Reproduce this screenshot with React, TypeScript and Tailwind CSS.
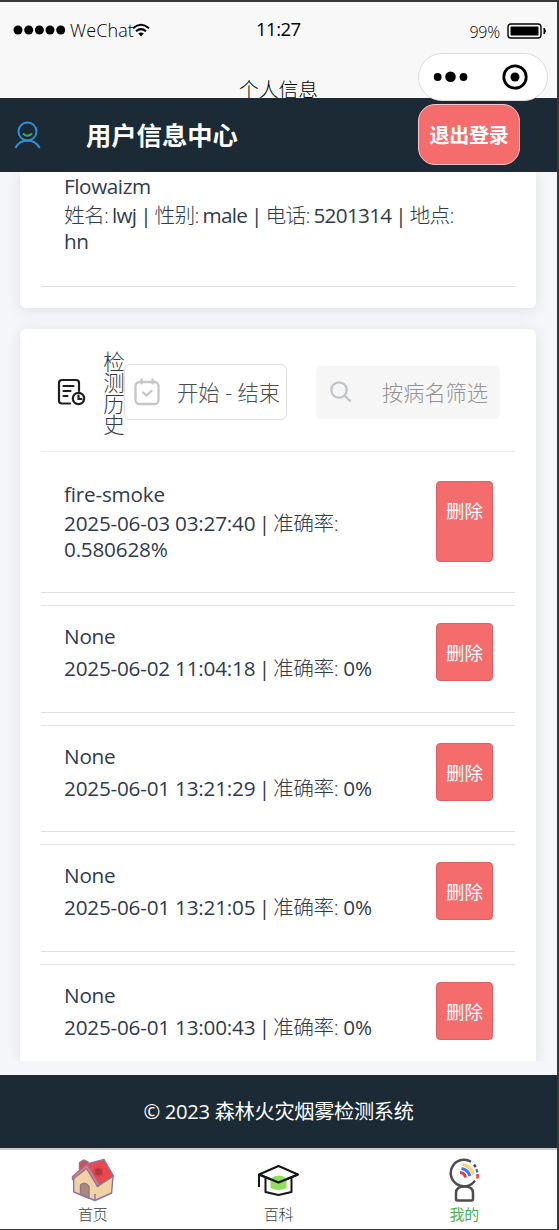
import type { ReactNode } from 'react';

type RecordItem = {
  name: string;
  date: string;
  rate: string;
  tall?: boolean;
  height: string;
};

const records: RecordItem[] = [
  {
    name: 'fire-smoke',
    date: '2025-06-03 03:27:40',
    rate: '0.580628%',
    tall: true,
    height: 'h-[130px] border-t-transparent',
  },
  { name: 'None', date: '2025-06-02 11:04:18', rate: '0%', height: 'h-[108px]' },
  { name: 'None', date: '2025-06-01 13:21:29', rate: '0%', height: 'h-[107px]' },
  { name: 'None', date: '2025-06-01 13:21:05', rate: '0%', height: 'h-[108px]' },
  { name: 'None', date: '2025-06-01 13:00:43', rate: '0%', height: 'h-[108px]' },
];

function StatusBar() {
  return (
    <div className="flex h-[56px] items-center pl-[13px] pr-2.5 text-black">
      <div className="flex w-[243px] items-center">
        <svg className="h-[10px] w-[53px]" viewBox="0 0 53 10">
          {[5, 15.7, 26.4, 37, 47.7].map((cx) => (
            <circle key={cx} cx={cx} cy="5" r="4.5" />
          ))}
        </svg>
        <span className="ml-[4px] w-[62px] whitespace-nowrap text-[18px] font-light tracking-[0.1px]">
          WeChat
        </span>
        <svg className="h-[14px] w-[18px]" viewBox="0 0 18 14" fill="none" stroke="#000">
          <path d="M1 5.2Q9-1.6 17 5.2" strokeWidth="2" />
          <path d="M4 8.2Q9 4 14 8.2" strokeWidth="2" />
          <path d="M6.2 10.6Q9 8.2 11.8 10.6L9 13.4Z" fill="#000" stroke="none" />
        </svg>
      </div>
      <span className="-mt-[2px] text-[18.5px] tracking-[-0.5px]">11:27</span>
      <div className="ml-auto flex items-center gap-[7px] pt-[4px]">
        <span className="text-[16px] font-light tracking-[-0.2px]">99%</span>
        <svg className="-mt-[2px] h-[16px] w-[40px]" viewBox="0 0 40 16">
          <rect x="1" y="1" width="33" height="14" rx="3" fill="none" stroke="#000" strokeWidth="1.4" />
          <rect x="3.5" y="3.5" width="28" height="9" rx="1" />
          <path d="M37 5q3 3 0 6z" stroke="#000" />
        </svg>
      </div>
    </div>
  );
}

function Capsule() {
  return (
    <div className="absolute left-[418px] top-[51px] z-10 flex h-[48px] w-[130px] items-center rounded-full border border-[#dcdcdc] bg-white">
      <svg className="h-[46px] w-[128px]" viewBox="0 0 128 46">
        <circle cx="18.7" cy="23" r="3.9" />
        <circle cx="31.5" cy="22.7" r="5.3" />
        <circle cx="44.5" cy="23" r="3.9" />
        <circle cx="96" cy="23" r="11.2" fill="none" stroke="#000" strokeWidth="2.8" />
        <circle cx="96" cy="23" r="4.5" />
      </svg>
    </div>
  );
}

function PageHeader() {
  return (
    <header className="flex h-[74px] shrink-0 items-center bg-[#1c2a35] pl-[14px]">
      <svg className="-mt-[1px] h-[28px] w-[27px]" viewBox="0 0 27 28" fill="none" strokeWidth="2">
        <circle cx="13.5" cy="10.5" r="9" stroke="#2f8fdf" />
        <path d="M1.3 27C4 22 8.5 19.6 13.5 19.6S23 22 25.7 27" stroke="#2f8fdf" />
        <path d="M9 12.5q4.5 4.5 9 0" stroke="#3fae46" />
      </svg>
      <h1 className="ml-[45px] w-[332px] whitespace-nowrap pt-[2px] text-[25.3px] font-bold leading-none text-white">
        用户信息中心
      </h1>
      <button className="-mt-[2px] h-[61px] w-[102px] whitespace-nowrap rounded-[17px] border border-[#fbc4c4] bg-[#f56c6c] pt-[3px] text-[20px] font-bold tracking-[-0.3px] text-white">
        退出登录
      </button>
    </header>
  );
}

function ProfileCard() {
  return (
    <section className="h-[136px] rounded-b-[6px] bg-white px-[21px] shadow-[0_2px_16px_rgba(0,0,0,0.09)]">
      <div className="h-[115px] whitespace-nowrap border-b border-[#dfdfdf] pl-[23px] pt-[1px] text-[20.7px] leading-[27px] tracking-[-0.4px]">
        <div>Flowaizm</div>
        <div className="mt-[2px] leading-[26px] tracking-[-0.7px] [word-spacing:-0.9px]">
          <span className="font-light">姓名:</span> lwj | <span className="font-light">性别:</span> male |{' '}
          <span className="font-light">电话:</span> 5201314 | <span className="font-light">地点:</span>
        </div>
        <div className="leading-[26px]">hn</div>
      </div>
    </section>
  );
}

function Filters() {
  return (
    <div className="flex h-[123px] items-center border-b border-[#ebebeb] pl-[16px] pt-[4px]">
      <svg className="h-[28px] w-[29px] shrink-0" viewBox="0 0 29 28" fill="none" stroke="#1f1f1f" strokeWidth="2.2" strokeLinecap="round">
        <path d="M13 25.5H5a3 3 0 0 1-3-3V5a3 3 0 0 1 3-3h14a3 3 0 0 1 3 3v8" />
        <path d="M6.5 8h10M6.5 13h7M6.5 18h4" />
        <circle cx="21.5" cy="20.5" r="5.7" />
        <path d="M21.5 17.5v3.500h3" />
      </svg>
      <div className="ml-[17px] w-[22px] shrink-0 pt-[2px] text-center text-[21.5px] font-light leading-[21.2px]">
        检测历史
      </div>
      <div className="-ml-px flex h-[56px] w-[163px] shrink-0 items-center rounded-[6px] border border-[#e0e0e0] pl-[9px]">
        <svg className="h-[28px] w-[26px]" viewBox="0 0 26 28" fill="none" stroke="#c4c6c9" strokeWidth="2.3" strokeLinecap="round">
          <rect x="1.5" y="4" width="23" height="22" rx="4" />
          <path d="M7.5 1.5v4M18.5 1.5v4M9 14.5l3.5 3 5-4.500" />
        </svg>
        <span className="ml-[17px] whitespace-nowrap pt-[2px] text-[21.3px] font-light text-[#4c4c4c]">
          开始 - 结束
        </span>
      </div>
      <div className="ml-[29px] flex h-[53px] w-[184px] shrink-0 items-center rounded-[6px] bg-[#f6f6f6] pl-[13px]">
        <svg className="h-[24px] w-[24px]" viewBox="0 0 24 24" fill="none" stroke="#c0c4c8" strokeWidth="2.3" strokeLinecap="round">
          <circle cx="10" cy="10" r="7.7" />
          <path d="M15.7 15.7l5.300 5.300" />
        </svg>
        <span className="ml-[29px] whitespace-nowrap pt-[2px] text-[21.2px] font-light text-[#929292]">
          按病名筛选
        </span>
      </div>
    </div>
  );
}

function RecordRow({ item }: { item: RecordItem }) {
  return (
    <li
      className={`flex shrink-0 items-start justify-between border-b border-t border-b-[#dedede] border-t-[#e6e6e6] pl-[23px] pr-[22px] pt-[17px] ${item.height}`}
    >
      <div className="-mt-px whitespace-nowrap text-[20.7px] tracking-[-0.2px]">
        <div className="leading-[28px]">{item.name}</div>
        <div className={item.tall ? 'pt-[2px] leading-[26px]' : 'leading-[36px]'}>
          {item.date}
          <span className="tracking-[-0.66px] [word-spacing:-1.2px]">
            {' | '}
            <span className="font-light tracking-[-0.5px]">准确率:</span>
          </span>
          {item.tall ? <br /> : ' '}
          {item.rate}
        </div>
      </div>
      <button
        className={`flex w-[57px] items-start justify-center rounded-[4px] border border-[#dc6161] bg-[#f56c6c] pt-[15px] text-[18.5px] leading-[28px] text-white ${
          item.tall ? 'h-[81px]' : 'h-[58px]'
        }`}
      >
        删除
      </button>
    </li>
  );
}

function HouseIcon() {
  return (
    <svg className="h-[44px] w-[44px]" viewBox="0 0 44 44" stroke="#8d7698" strokeWidth="1.4" strokeLinejoin="round">
      <path d="M8.500 13V4.500l4-2.500 4.500 2v7z" fill="#d94e55" />
      <path d="M2.700 19L15 9l27 9-1.400 17L24 42.500 2.700 34z" fill="#f2d1a5" />
      <path d="M16 6L33 1.500 42.500 18 26.500 28.500z" fill="#e9494e" />
      <path d="M16 6L1.500 18.500v3L15.500 10.500 26.500 28.500l2-2z" fill="#f77470" />
      <path d="M9.500 36.500V27q4.500-4 8.500 1.500V40z" fill="#ad8874" />
      <path d="M24 42v-6" />
      <path d="M23.500 11l4-2 4 2v5.500l-4 2-4-2z" fill="#b93440" stroke="#d8454c" />
    </svg>
  );
}

function CapIcon() {
  return (
    <svg className="h-[44px] w-[44px]" viewBox="0 0 44 44" fill="none" stroke="#161616" strokeWidth="2" strokeLinejoin="round">
      <path d="M2 16.500L21.500 8 41 16.500 21.500 24.500z" fill="#fff" />
      <path d="M13.500 20.500q8-6 16 0v9.500q-8 4-16 0z" fill="#91dd5c" stroke="none" />
      <path d="M2 16v13M8.500 20v14l13 3 13-3V20" />
      <path d="M2 16.500l19.500 8L41 16.500" />
    </svg>
  );
}

function MineIcon() {
  return (
    <svg className="h-[44px] w-[44px]" viewBox="0 0 44 44" fill="none" strokeWidth="2.500">
      <path d="M29 3.700A13.300 13.300 0 1 0 33 22.600" stroke="#4d4d4d" />
      <path d="M32 6.500l1.800 2.500" stroke="#4d4d4d" />
      <path d="M34.500 11l.800 3.500" stroke="#3778f4" />
      <path d="M35.500 16v4.500" stroke="#e83e3e" />
      <path d="M14 41v-6q0-6.500 8.500-6.500T31 35v6q0 1.500-1.500 1.500h-14Q14 42.500 14 41z" stroke="#4d4d4d" />
      <path d="M20.500 6.500q8 1 11 10" stroke="#ffd166" strokeWidth="3" />
      <path d="M19.500 10.500q6.500 1 8.500 7.500" stroke="#3778f4" strokeWidth="3" />
      <path d="M18 14.500q4.500 0 5.500 5" stroke="#e83e3e" strokeWidth="3" />
    </svg>
  );
}

function TabItem({ label, icon, active }: { label: string; icon: ReactNode; active?: boolean }) {
  return (
    <div className="flex flex-1 flex-col items-center pt-[8px]">
      {icon}
      <span
        className={`mt-[2px] text-[15px] leading-[20px] tracking-[-0.2px] ${
          active ? 'text-[#4caf50]' : 'font-light text-[#3c3c3c]'
        }`}
      >
        {label}
      </span>
    </div>
  );
}

function App() {
  return (
    <div className="relative flex h-[1230px] w-[559px] flex-col overflow-hidden border-b border-r-2 border-t-2 border-[#393637] bg-[#f4f6fa] font-['Open_Sans','Noto_Sans_CJK_SC',sans-serif] text-[#303b4b]">
      <div className="h-[96px] shrink-0 overflow-hidden bg-[#f8f8f8]">
        <StatusBar />
        <div className="mt-[17px] text-center text-[19.8px] font-light leading-[30px] text-black">
          个人信息
        </div>
      </div>
      <Capsule />
      <PageHeader />

      <main className="flex h-[889px] shrink-0 flex-col gap-[21px] overflow-hidden pl-5 pr-[21px]">
        <ProfileCard />
        <section className="h-[732px] rounded-t-[6px] bg-white px-[21px] shadow-[0_2px_16px_rgba(0,0,0,0.09)]">
          <Filters />
          <ul className="flex flex-col gap-[12px] pt-[11px]">
            {records.map((item) => (
              <RecordRow key={item.date} item={item} />
            ))}
          </ul>
        </section>
      </main>

      <footer className="mt-[14px] flex h-[73px] shrink-0 items-center justify-center whitespace-nowrap bg-[#1c2a35] text-[20.2px] tracking-[-0.3px] text-white">
        © 2023 森林火灾烟雾检测系统
      </footer>
      <nav className="flex flex-1 border-t-2 border-[#c9ccce] bg-white">
        <TabItem label="首页" icon={<HouseIcon />} />
        <TabItem label="百科" icon={<CapIcon />} />
        <TabItem label="我的" icon={<MineIcon />} active />
      </nav>
    </div>
  );
}

export default App;
